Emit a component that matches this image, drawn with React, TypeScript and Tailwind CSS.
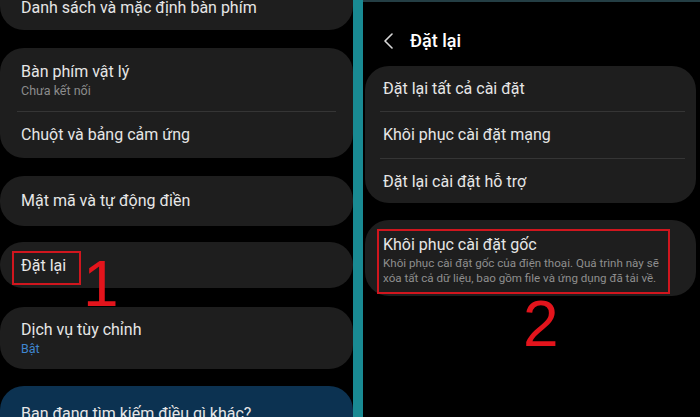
import React from "react";

const font = { fontFamily: "Roboto, 'Noto Sans', sans-serif" };

export default function App() {
  return (
    <div
      className="relative w-[700px] h-[417px] overflow-hidden bg-black flex text-[#e6e6e6]"
      style={font}
    >
      {/* Left panel */}
      <div className="w-[353px] shrink-0 flex flex-col">
        <div className="shrink-0 h-[30px] bg-[#1e1e1e] rounded-b-[24px] pl-[21px]">
          <div className="text-[16px] leading-[20px] -mt-[2px]">Danh sách và mặc định bàn phím</div>
        </div>

        <div className="shrink-0 mt-[18px] bg-[#1e1e1e] rounded-[24px]">
          <div className="pl-[21px] pt-[13px] pb-[12px]">
            <div className="text-[16px] leading-[22px]">Bàn phím vật lý</div>
            <div className="text-[12.5px] leading-[16px] text-[#8c8c8c]">Chưa kết nối</div>
          </div>
          <div className="mx-[17px] h-px bg-[#353535]" />
          <div className="pl-[21px] pt-[12px] pb-[12px] text-[16px] leading-[22px]">Chuột và bảng cảm ứng</div>
        </div>

        <div className="shrink-0 mt-[18px] bg-[#1e1e1e] rounded-[24px] pl-[21px] pt-[14px] pb-[14px] text-[16px] leading-[22px]">
          Mật mã và tự động điền
        </div>

        <div className="shrink-0 mt-[16px] bg-[#1e1e1e] rounded-[24px] pl-[21px] pt-[13px] pb-[11px] text-[16px] leading-[22px]">
          Đặt lại
        </div>

        <div className="shrink-0 mt-[19px] bg-[#1e1e1e] rounded-[24px] pl-[21px] pt-[12px] pb-[12px]">
          <div className="text-[16px] leading-[22px]">Dịch vụ tùy chỉnh</div>
          <div className="text-[12.5px] leading-[16px] text-[#3f86cf]">Bật</div>
        </div>

        <div className="shrink-0 mt-[17px] bg-[#0c3251] rounded-t-[24px] pl-[21px] pt-[17px] h-[60px] text-[16px] leading-[22px]">
          Bạn đang tìm kiếm điều gì khác?
        </div>
      </div>

      {/* Divider */}
      <div className="w-[10px] shrink-0 bg-[#198a93]" />

      {/* Right panel */}
      <div className="flex-1 flex flex-col border-t-2 border-[#243e44] pl-[2px] pr-[4px]">
        <div className="shrink-0 h-[64px] flex items-start pt-[27px] pl-[18px]">
          <svg width="12" height="16" viewBox="0 0 12 16" className="mt-[4px]">
            <polyline points="9,1 2,8 9,15" fill="none" stroke="#d8d8d8" strokeWidth="1.6" strokeLinecap="round" strokeLinejoin="round" />
          </svg>
          <div className="ml-[15px] text-[18px] font-medium text-white leading-[24px]">Đặt lại</div>
        </div>

        <div className="shrink-0 bg-[#1e1e1e] rounded-[24px]">
          <div className="pl-[18px] pt-[12px] pb-[11px] text-[16px] leading-[22px]">Đặt lại tất cả cài đặt</div>
          <div className="ml-[15px] mr-[11px] h-px bg-[#353535]" />
          <div className="pl-[18px] pt-[12px] pb-[12px] text-[16px] leading-[22px]">Khôi phục cài đặt mạng</div>
          <div className="ml-[15px] mr-[11px] h-px bg-[#353535]" />
          <div className="pl-[18px] pt-[12px] pb-[10px] text-[16px] leading-[22px]">Đặt lại cài đặt hỗ trợ</div>
        </div>

        <div className="shrink-0 mt-[17px] bg-[#1e1e1e] rounded-[24px] pl-[18px] pt-[14px] pb-[10px]">
          <div className="text-[16px] leading-[22px]">Khôi phục cài đặt gốc</div>
          <div className="text-[11.6px] leading-[15px] text-[#8e8e8e] pr-[20px]">
            Khôi phục cài đặt gốc của điện thoại. Quá trình này sẽ xóa tất cả dữ liệu, bao gồm file và ứng dụng đã tải về.
          </div>
        </div>
      </div>

      {/* Annotations */}
      <div className="absolute left-[12px] top-[251px] w-[69px] h-[34px] border-2 border-[#d0161e]" />
      <div
        className="absolute left-[83px] top-[248px] text-[64px] leading-[72px] text-[#e3141c]"
        style={{ fontFamily: "'Liberation Sans', Arial, sans-serif" }}
      >
        1
      </div>
      <div className="absolute left-[377px] top-[229px] w-[293px] h-[65px] border-2 border-[#d0161e]" />
      <div
        className="absolute left-[523px] top-[288px] text-[64px] leading-[72px] text-[#e3141c]"
        style={{ fontFamily: "'Liberation Sans', Arial, sans-serif" }}
      >
        2
      </div>
    </div>
  );
}
